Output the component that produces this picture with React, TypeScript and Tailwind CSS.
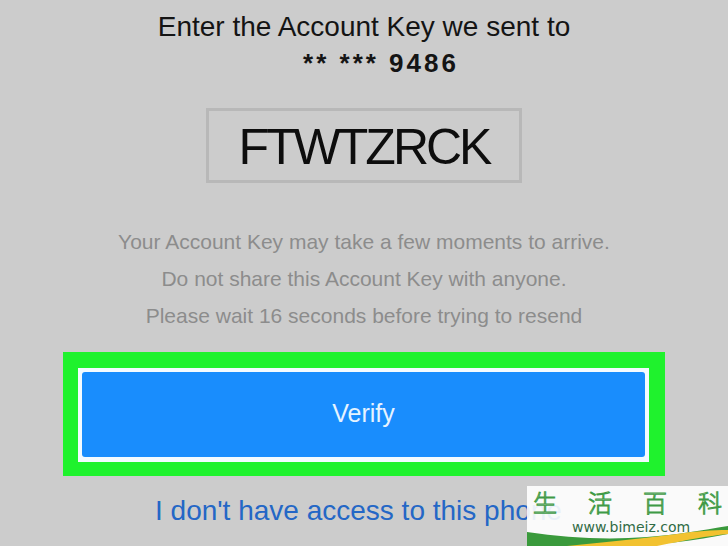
export default function App() {
  return (
    <div className="relative w-[728px] h-[546px] overflow-hidden bg-[#cccccc] font-['Liberation_Sans',Arial,sans-serif]">
      <div className="flex flex-col items-center pt-[11px]">
        <div className="text-[28px] leading-[32px] text-[#141414]">Enter the Account Key we sent to</div>
        <div className="mt-[4px] text-[26px] leading-[32px] font-bold tracking-[3px] text-[#141414] pl-[34px]">
          ** *** 9486
        </div>

        {/* key box */}
        <div className="mt-[29px] w-[316px] h-[75px] border-[3px] border-[#b8b8b8] flex items-center justify-center">
          <span className="text-[50px] leading-none tracking-[-3px] text-[#0d0d0d] pt-[3px]">FTWTZRCK</span>
        </div>

        <div className="mt-[40px] flex flex-col items-center text-[21px] leading-[37px] text-[#8c8c8c]">
          <div>Your Account Key may take a few moments to arrive.</div>
          <div>Do not share this Account Key with anyone.</div>
          <div>Please wait 16 seconds before trying to resend</div>
        </div>

        {/* highlighted button */}
        <div className="mt-[18px] w-[602px] h-[124px] bg-[#1ff22d] pl-[15px] pr-[16px] pt-[16px] pb-[14px] flex">
          <div className="flex-1 bg-[#f4fbff] pt-[4px] px-[4px] pb-[5px] flex">
            <button className="flex-1 rounded-[3px] bg-[#198dfd] text-[25px] text-[#e6f3ff] flex items-center justify-center pb-[2px]">
              Verify
            </button>
          </div>
        </div>

        <div className="mt-[19px] self-start pl-[155px] text-[28px] leading-[32px] text-[#2467c6]">
          I don't have access to this phone
        </div>
      </div>

      {/* watermark */}
      <div className="absolute right-0 bottom-0 w-[201px] h-[60px] bg-white/90">
        <div className="flex justify-between px-[6px] pt-[1px] text-[24px] leading-[30px] font-['Noto_Sans_CJK_SC',sans-serif] font-light text-transparent [-webkit-text-stroke:1px_#3f9a46]">
          <span>生</span>
          <span>活</span>
          <span>百</span>
          <span>科</span>
        </div>
        <div className="absolute left-[45px] top-[34px] text-[14px] leading-[14px] text-[#2f6b45] font-['DejaVu_Sans',sans-serif]">
          www.bimeiz.com
        </div>
        <svg className="absolute left-0 bottom-0" width="201" height="20" viewBox="0 0 201 20">
          <path d="M0 6 C40 12 80 14 120 11 C150 9 175 4 201 0 L201 8 C170 14 130 20 90 20 L0 20 Z" fill="#3a9a3c" />
          <path d="M40 20 C80 16 120 12 150 8 C170 5 185 4 201 4 L201 8 C180 10 160 14 130 20 Z" fill="#f2c230" />
        </svg>
      </div>
    </div>
  );
}
